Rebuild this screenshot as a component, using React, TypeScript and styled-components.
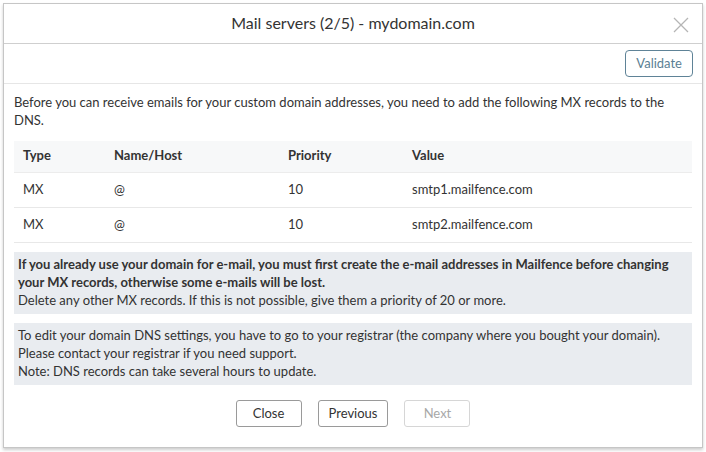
import React from "react";
import styled, { createGlobalStyle } from "styled-components";

const Global = createGlobalStyle`
  html, body { margin: 0; padding: 0; background: #ffffff; }
  body { font-family: Lato, "Open Sans", sans-serif; color: #333333; }
  * { box-sizing: border-box; }
`;

const Page = styled.div`
  padding: 3px 4px 0 3px;
  width: 706px;
  height: 452px;
`;

const Dialog = styled.div`
  width: 700px;
  height: 445px;
  border: 1px solid #c6c6c6;
  background: #fff;
  box-shadow: 0 2px 3px rgba(0, 0, 0, 0.2);
  display: flex;
  flex-direction: column;
`;

const Header = styled.div`
  height: 40px;
  border-bottom: 1px solid #cfcfcf;
  display: flex;
  align-items: center;
  justify-content: center;
  position: relative;
`;

const Title = styled.h1`
  margin: 0 0 3px 0;
  font-size: 16px;
  font-weight: 400;
  color: #333;
`;

const CloseX = styled.button`
  position: absolute;
  right: 13px;
  top: 13px;
  width: 16px;
  height: 16px;
  padding: 0;
  border: none;
  background: transparent;
  display: flex;
`;

const Toolbar = styled.div`
  height: 40px;
  border-bottom: 1px solid #e6e6e6;
  display: flex;
  justify-content: flex-end;
  align-items: center;
  padding: 0 9px 1px 0;
`;

const OutlineButton = styled.button`
  height: 27px;
  padding: 0 10px;
  border: 1px solid #5f8397;
  border-radius: 4px;
  background: #fff;
  color: #5b7f94;
  font-family: Lato, sans-serif;
  font-size: 13px;
`;

const Body = styled.div`
  padding: 9px 10px 0 10px;
  display: flex;
  flex-direction: column;
  flex: 1;
`;

const Intro = styled.p`
  margin: 0 0 12px 0;
  font-size: 13px;
  line-height: 18px;
  color: #333;
`;

const Table = styled.table`
  width: 100%;
  border-collapse: collapse;
  font-size: 13px;
  color: #333;
  margin-bottom: 9px;
`;

const Th = styled.th<{ $w?: number }>`
  text-align: left;
  font-weight: 700;
  background: #f7f8f9;
  height: 31px;
  padding: 0 9px 2px 9px;
  width: ${(p) => (p.$w ? `${p.$w}px` : "auto")};
  border-bottom: 1px solid #ececec;
`;

const Td = styled.td`
  height: 35px;
  padding: 0 9px 1px 9px;
  border-bottom: 1px solid #e8e8e8;
`;

const Notice = styled.div`
  background: #e9ecf0;
  padding: 3px 4px 5px 4px;
  font-size: 13px;
  line-height: 18px;
  color: #333;
  margin-bottom: 9px;
`;

const Strong = styled.div`
  font-weight: 700;
`;

const Footer = styled.div`
  display: flex;
  justify-content: center;
  gap: 16px;
  padding-top: 6px;
`;

const FooterButton = styled.button<{ $disabled?: boolean }>`
  height: 27px;
  padding: 0 10px;
  min-width: 66px;
  border: 1px solid ${(p) => (p.$disabled ? "#d6d6d6" : "#9a9a9a")};
  border-radius: 3px;
  background: #fff;
  color: ${(p) => (p.$disabled ? "#a8a8a8" : "#333")};
  font-family: Lato, sans-serif;
  font-size: 13px;
`;

const rows = [
  { type: "MX", host: "@", prio: "10", value: "smtp1.mailfence.com" },
  { type: "MX", host: "@", prio: "10", value: "smtp2.mailfence.com" },
];

export default function App() {
  return (
    <>
      <Global />
      <Page>
        <Dialog>
          <Header>
            <Title>Mail servers (2/5) - mydomain.com</Title>
            <CloseX aria-label="Close">
              <svg width="16" height="16" viewBox="0 0 16 16">
                <path d="M1 1 L15 15 M15 1 L1 15" stroke="#b5b5b5" strokeWidth="1.3" fill="none" />
              </svg>
            </CloseX>
          </Header>
          <Toolbar>
            <OutlineButton>Validate</OutlineButton>
          </Toolbar>
          <Body>
            <Intro>
              Before you can receive emails for your custom domain addresses, you need to add the following MX records to the DNS.
            </Intro>
            <Table>
              <thead>
                <tr>
                  <Th $w={91}>Type</Th>
                  <Th $w={174}>Name/Host</Th>
                  <Th $w={124}>Priority</Th>
                  <Th>Value</Th>
                </tr>
              </thead>
              <tbody>
                {rows.map((r) => (
                  <tr key={r.value}>
                    <Td>{r.type}</Td>
                    <Td>{r.host}</Td>
                    <Td>{r.prio}</Td>
                    <Td>{r.value}</Td>
                  </tr>
                ))}
              </tbody>
            </Table>
            <Notice>
              <Strong>
                If you already use your domain for e-mail, you must first create the e-mail addresses in Mailfence before changing your MX records, otherwise some e-mails will be lost.
              </Strong>
              Delete any other MX records. If this is not possible, give them a priority of 20 or more.
            </Notice>
            <Notice>
              To edit your domain DNS settings, you have to go to your registrar (the company where you bought your domain).
              <br />
              Please contact your registrar if you need support.
              <br />
              Note: DNS records can take several hours to update.
            </Notice>
            <Footer>
              <FooterButton>Close</FooterButton>
              <FooterButton>Previous</FooterButton>
              <FooterButton $disabled>Next</FooterButton>
            </Footer>
          </Body>
        </Dialog>
      </Page>
    </>
  );
}
